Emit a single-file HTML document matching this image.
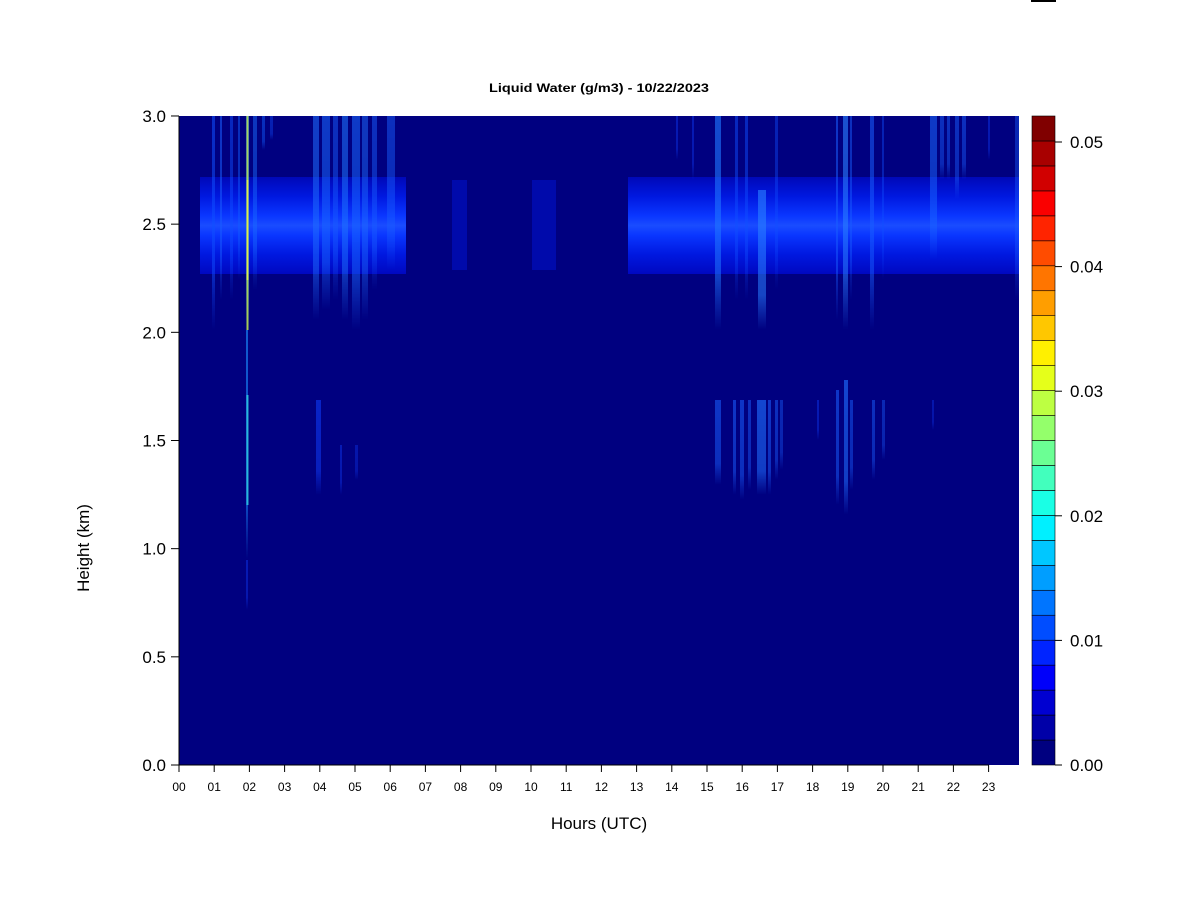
<!DOCTYPE html>
<html><head><meta charset="utf-8"><style>
html,body{margin:0;padding:0;background:#fff;}
svg{display:block;font-family:"Liberation Sans",Arial,sans-serif;}
</style></head><body>
<svg id="s" width="1200" height="900" xmlns="http://www.w3.org/2000/svg">
<defs id="defs">
<linearGradient id="band" x1="0" y1="0" x2="0" y2="1">
<stop offset="0" stop-color="#0008b8"/>
<stop offset="0.2" stop-color="#0018e0"/>
<stop offset="0.4" stop-color="#0a36ff"/>
<stop offset="0.5" stop-color="#1a4cff"/>
<stop offset="0.6" stop-color="#0a36ff"/>
<stop offset="0.8" stop-color="#0018e0"/>
<stop offset="1" stop-color="#0008c0"/>
</linearGradient>
<linearGradient id="fade" x1="0" y1="0" x2="0" y2="1">
<stop offset="0" stop-color="#fff" stop-opacity="0.7"/>
<stop offset="0.75" stop-color="#fff" stop-opacity="0.6"/>
<stop offset="1" stop-color="#fff" stop-opacity="0"/>
</linearGradient>
</defs>
<rect x="1031" y="0" width="25" height="2" fill="#000"/>
<text x="599" y="92" font-size="12" font-weight="bold" text-anchor="middle" textLength="220" lengthAdjust="spacingAndGlyphs">Liquid Water (g/m3) - 10/22/2023</text>
<rect x="179" y="116" width="840" height="649" fill="#000080"/>
<g id="data"></g>
<g id="axes" stroke="#000" stroke-width="1"></g>
<g id="labels" font-size="17" fill="#000"></g>
<text x="599" y="829" font-size="17" text-anchor="middle">Hours (UTC)</text>
<text x="0" y="0" font-size="17" text-anchor="middle" transform="translate(89,548) rotate(-90)">Height (km)</text>
<g id="cbar"></g>
</svg>
<script>
const NS="http://www.w3.org/2000/svg";
function el(p,t,a,txt){const e=document.createElementNS(NS,t);for(const k in a)e.setAttribute(k,a[k]);if(txt!==undefined)e.textContent=txt;document.getElementById(p).appendChild(e);return e;}
function clamp(v){return Math.max(0,Math.min(1,v));}
function jet(t){const r=clamp(1.5-Math.abs(4*t-3)),g=clamp(1.5-Math.abs(4*t-2)),b=clamp(1.5-Math.abs(4*t-1));return `rgb(${Math.round(r*255)},${Math.round(g*255)},${Math.round(b*255)})`;}
[[200,406],[628,1019]].forEach(s=>el("data","rect",{x:s[0],y:177,width:s[1]-s[0],height:97,fill:"url(#band)"}));
[[452,467],[532,556]].forEach(s=>el("data","rect",{x:s[0],y:180,width:s[1]-s[0],height:90,fill:"#0010c8",opacity:0.6}));
const st=[
[212,3,116,330,"#1050ff",0.8],[220,2,116,300,"#1a60ff",0.8],[230,3,116,300,"#1050ff",0.7],[238,2,116,280,"#1060ff",0.7],
[253,4,116,290,"#1a70ff",0.7],[262,3,116,150,"#1060ff",0.7],[270,3,116,140,"#1050ff",0.6],
[313,6,116,320,"#2070ff",0.8],[322,8,116,310,"#1a68ff",0.8],[333,5,116,300,"#1a60ff",0.7],
[342,6,116,320,"#2078ff",0.8],[352,8,116,330,"#1a68ff",0.8],[362,6,116,320,"#2070ff",0.7],[372,5,116,290,"#1a60ff",0.7],
[387,8,116,270,"#1a60ff",0.7],
[676,2,116,160,"#1040ff",0.6],[692,2,116,180,"#1040ff",0.6],
[715,6,116,330,"#2078ff",0.9],[735,3,116,300,"#1050ff",0.7],[745,3,116,300,"#1050ff",0.7],
[758,8,190,330,"#2a80ff",0.9],[775,3,116,290,"#1050ff",0.6],
[836,2,116,320,"#1a60ff",0.8],[843,5,116,330,"#2a80ff",0.9],[850,2,116,300,"#1a60ff",0.7],
[870,4,116,330,"#1a60ff",0.8],[882,2,116,280,"#1050ff",0.6],
[930,7,116,260,"#1a68ff",0.8],[940,4,116,180,"#1a60ff",0.7],[947,3,116,180,"#1a60ff",0.7],[955,4,116,200,"#1a60ff",0.7],[962,4,116,180,"#1a60ff",0.7],
[988,2,116,160,"#1040ff",0.6],[1015,4,116,300,"#1a60ff",0.6],
[715,6,400,485,"#1a60ff",0.8],[733,3,400,495,"#1a60ff",0.8],[740,4,400,500,"#1a60ff",0.8],[748,3,400,490,"#1a60ff",0.7],
[757,9,400,495,"#2070ff",0.9],[768,3,400,495,"#1a60ff",0.8],[775,3,400,480,"#1a60ff",0.7],[780,3,400,470,"#1a60ff",0.6],
[817,2,400,440,"#1040ff",0.6],[836,3,390,505,"#1a60ff",0.8],[844,4,380,515,"#2070ff",0.9],[850,3,400,490,"#1a60ff",0.7],
[872,3,400,480,"#1a60ff",0.7],[882,3,400,460,"#1a60ff",0.6],[932,2,400,430,"#1040ff",0.5],
[316,5,400,495,"#1040ff",0.8],[340,2,445,495,"#1040ff",0.6],[355,3,445,480,"#1040ff",0.5],
[246,3,116,330,"#1a80ff",0.9],[246,2,330,560,"#1a90ff",0.9],[246,2,560,610,"#1040ff",0.6]
];
st.forEach((s,i)=>{
 const m=el("defs","mask",{id:"m"+i,maskContentUnits:"objectBoundingBox"});
 const r=document.createElementNS(NS,"rect");r.setAttribute("x",0);r.setAttribute("y",0);r.setAttribute("width",1);r.setAttribute("height",1);r.setAttribute("fill","url(#fade)");m.appendChild(r);
 el("data","rect",{x:s[0],y:s[2],width:s[1],height:s[3]-s[2],fill:s[4],opacity:s[5],mask:"url(#m"+i+")"});
});
el("data","rect",{x:246.5,y:116,width:2,height:214,fill:"#b8e050",opacity:0.9});
el("data","rect",{x:246.5,y:180,width:2,height:100,fill:"#e8f040",opacity:0.9});
el("data","rect",{x:246.5,y:395,width:2,height:110,fill:"#30d0e0",opacity:0.8});
el("axes","line",{x1:179,y1:116,x2:179,y2:765});
el("axes","line",{x1:179,y1:765,x2:989,y2:765});
for(let i=0;i<=6;i++){const y=765-i*108.17;el("axes","line",{x1:171,y1:y,x2:179,y2:y});
 el("labels","text",{x:166,y:y+6,"text-anchor":"end"},(i*0.5).toFixed(1));}
for(let i=0;i<24;i++){const x=179+i*35.2;el("axes","line",{x1:x,y1:765,x2:x,y2:772});
 el("labels","text",{x:x,y:791,"text-anchor":"middle","font-size":"12"},String(i).padStart(2,"0"));}
const n=26,h=649/n;
for(let i=0;i<n;i++){const y=765-(i+1)*h;el("cbar","rect",{x:1032,y:y,width:23,height:h,fill:jet(i/(n-1)),stroke:"#000","stroke-width":0.6});}
for(let i=0;i<=5;i++){const y=765-i*124.6;el("cbar","line",{x1:1055,y1:y,x2:1062,y2:y,stroke:"#000"});
 el("cbar","text",{x:1070,y:y+6,"font-size":"17"},(i*0.01).toFixed(2));}
</script>
</body></html>
